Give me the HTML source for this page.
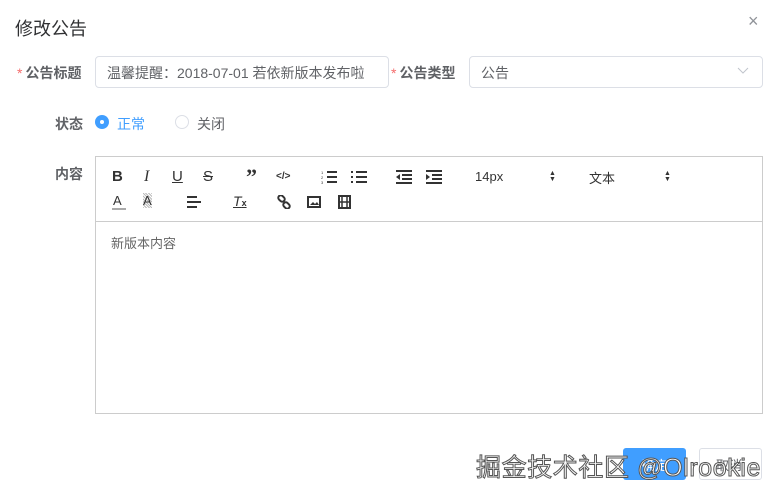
<!DOCTYPE html>
<html><head><meta charset="utf-8"><style>
*{margin:0;padding:0;box-sizing:border-box}
body{width:779px;height:496px;background:#fff;font-family:"Liberation Sans","Noto Sans CJK SC",sans-serif;position:relative;overflow:hidden;color:#606266;font-size:14px}
.a{position:absolute;white-space:nowrap}
.lbl{font-weight:bold;color:#606266;font-size:14px}
.req{color:#f56c6c;font-weight:normal;margin-right:3px}
.inp{position:absolute;border:1px solid #dcdfe6;border-radius:4px;background:#fff}
.tb{position:absolute;color:#333;font-size:14px}
svg{position:absolute}
</style></head><body>
<div class="a" style="left:15px;top:15px;font-size:18px;color:#303133">修改公告</div>
<div class="a" style="left:748px;top:11px;font-size:18px;color:#909399">×</div>

<div class="a lbl" style="left:17px;top:63px"><span class="req">*</span>公告标题</div>
<div class="inp" style="left:95px;top:56px;width:294px;height:32px"></div>
<div class="a" style="left:107px;top:63px;color:#606266">温馨提醒：2018-07-01 若依新版本发布啦</div>
<div class="a lbl" style="left:391px;top:63px"><span class="req">*</span>公告类型</div>
<div class="inp" style="left:469px;top:56px;width:294px;height:32px"></div>
<div class="a" style="left:481px;top:63px">公告</div>
<svg style="left:737px;top:67px" width="12" height="8"><path d="M1 1l5 5 5-5" fill="none" stroke="#c0c4cc" stroke-width="1"/></svg>

<div class="a lbl" style="left:55px;top:114px">状态</div>
<div class="a" style="left:95px;top:115px;width:14px;height:14px;border-radius:50%;background:#409eff"></div>
<div class="a" style="left:100px;top:120px;width:4px;height:4px;border-radius:50%;background:#fff"></div>
<div class="a" style="left:117px;top:114px;color:#409eff">正常</div>
<div class="a" style="left:175px;top:115px;width:14px;height:14px;border-radius:50%;border:1px solid #dcdfe6"></div>
<div class="a" style="left:197px;top:114px">关闭</div>

<div class="a lbl" style="left:55px;top:164px">内容</div>
<div class="a" style="left:95px;top:156px;width:668px;height:258px;border:1px solid #ccc"></div>
<div class="a" style="left:96px;top:221px;width:666px;height:1px;background:#ccc"></div>
<div class="a" style="left:111px;top:233px;font-size:13px;color:#666">新版本内容</div>

<div class="tb" style="left:112px;top:168px;font-weight:bold;font-size:15px">B</div>
<div class="tb" style="left:144px;top:168px;font-style:italic;font-family:'Liberation Serif',serif;font-size:16px">I</div>
<div class="tb" style="left:172px;top:168px;text-decoration:underline;font-size:15px">U</div>
<div class="tb" style="left:203px;top:168px;text-decoration:line-through;font-size:15px">S</div>
<div class="tb" style="left:246px;top:164px;font-weight:bold;font-size:22px;font-family:'Liberation Serif',serif">”</div>
<div class="tb" style="left:276px;top:171px;font-weight:bold;font-size:10px">&lt;/&gt;</div>
<svg style="left:321px;top:170px" width="16" height="14"><g stroke="#333" stroke-width="2"><path d="M6 2h10M6 7h10M6 12h10"/></g><g fill="#333" font-size="4"><text x="0" y="4">1</text><text x="0" y="9">2</text><text x="0" y="14">3</text></g></svg>
<svg style="left:351px;top:170px" width="16" height="14"><g stroke="#333" stroke-width="2"><path d="M5 2h11M5 7h11M5 12h11M0 2h2M0 7h2M0 12h2"/></g></svg>
<svg style="left:396px;top:170px" width="16" height="14"><g stroke="#333" stroke-width="2"><path d="M0 1h16M6 5h10M6 9h10M0 13h16"/></g><path d="M4 4L0 7l4 3z" fill="#333"/></svg>
<svg style="left:426px;top:170px" width="16" height="14"><g stroke="#333" stroke-width="2"><path d="M0 1h16M6 5h10M6 9h10M0 13h16"/></g><path d="M0 4l4 3-4 3z" fill="#333"/></svg>
<div class="tb" style="left:475px;top:169px;font-size:13px">14px</div>
<div class="tb" style="left:549px;top:171px;font-size:7px;line-height:6px">▲<br>▼</div>
<div class="tb" style="left:589px;top:168px;font-size:13px">文本</div>
<div class="tb" style="left:664px;top:171px;font-size:7px;line-height:6px">▲<br>▼</div>

<div class="tb" style="left:113px;top:193px;font-size:13px">A</div>
<div class="a" style="left:112px;top:208px;width:14px;height:2px;background:#aaa"></div>
<div class="tb" style="left:143px;top:193px;font-size:13px;background:repeating-linear-gradient(45deg,#bbb 0 1px,#fff 1px 2px)">A</div>
<svg style="left:187px;top:196px" width="14" height="12"><g stroke="#333" stroke-width="2"><path d="M0 1h10M0 6h14M0 11h10"/></g></svg>
<div class="tb" style="left:233px;top:193px;font-style:italic;font-size:14px;text-decoration:underline">T<span style="font-size:9px;font-style:normal;font-weight:bold">x</span></div>
<svg style="left:277px;top:195px" width="14" height="14"><g fill="none" stroke="#333" stroke-width="2"><rect x="1" y="1" width="7" height="5" rx="2.5" transform="rotate(45 4.5 3.5)"/><rect x="6" y="8" width="7" height="5" rx="2.5" transform="rotate(45 9.5 10.5)"/></g></svg>
<svg style="left:307px;top:196px" width="14" height="12"><rect x="1" y="1" width="12" height="10" fill="none" stroke="#333" stroke-width="2"/><path d="M3 9l3-3 2 2 2-2 2 3z" fill="#333"/></svg>
<svg style="left:338px;top:195px" width="13" height="14"><rect x="1" y="1" width="11" height="12" fill="none" stroke="#333" stroke-width="2"/><path d="M4 1v12M9 1v12M1 7h11" stroke="#333" stroke-width="1.5"/></svg>

<div class="a" style="left:623px;top:448px;width:63px;height:32px;background:#409eff;border-radius:3px"></div>
<div class="a" style="left:642px;top:455px;color:#fff;font-size:13px">确定</div>
<div class="a" style="left:699px;top:448px;width:63px;height:32px;border:1px solid #dcdfe6;border-radius:3px"></div>
<div class="a" style="left:716px;top:455px;font-size:13px">取消</div>
<div class="a" style="left:476px;top:448px;font-size:25px;color:#fff;-webkit-text-stroke:1px #555;letter-spacing:0.6px">掘金技术社区 @Olrookie</div>
</body></html>
